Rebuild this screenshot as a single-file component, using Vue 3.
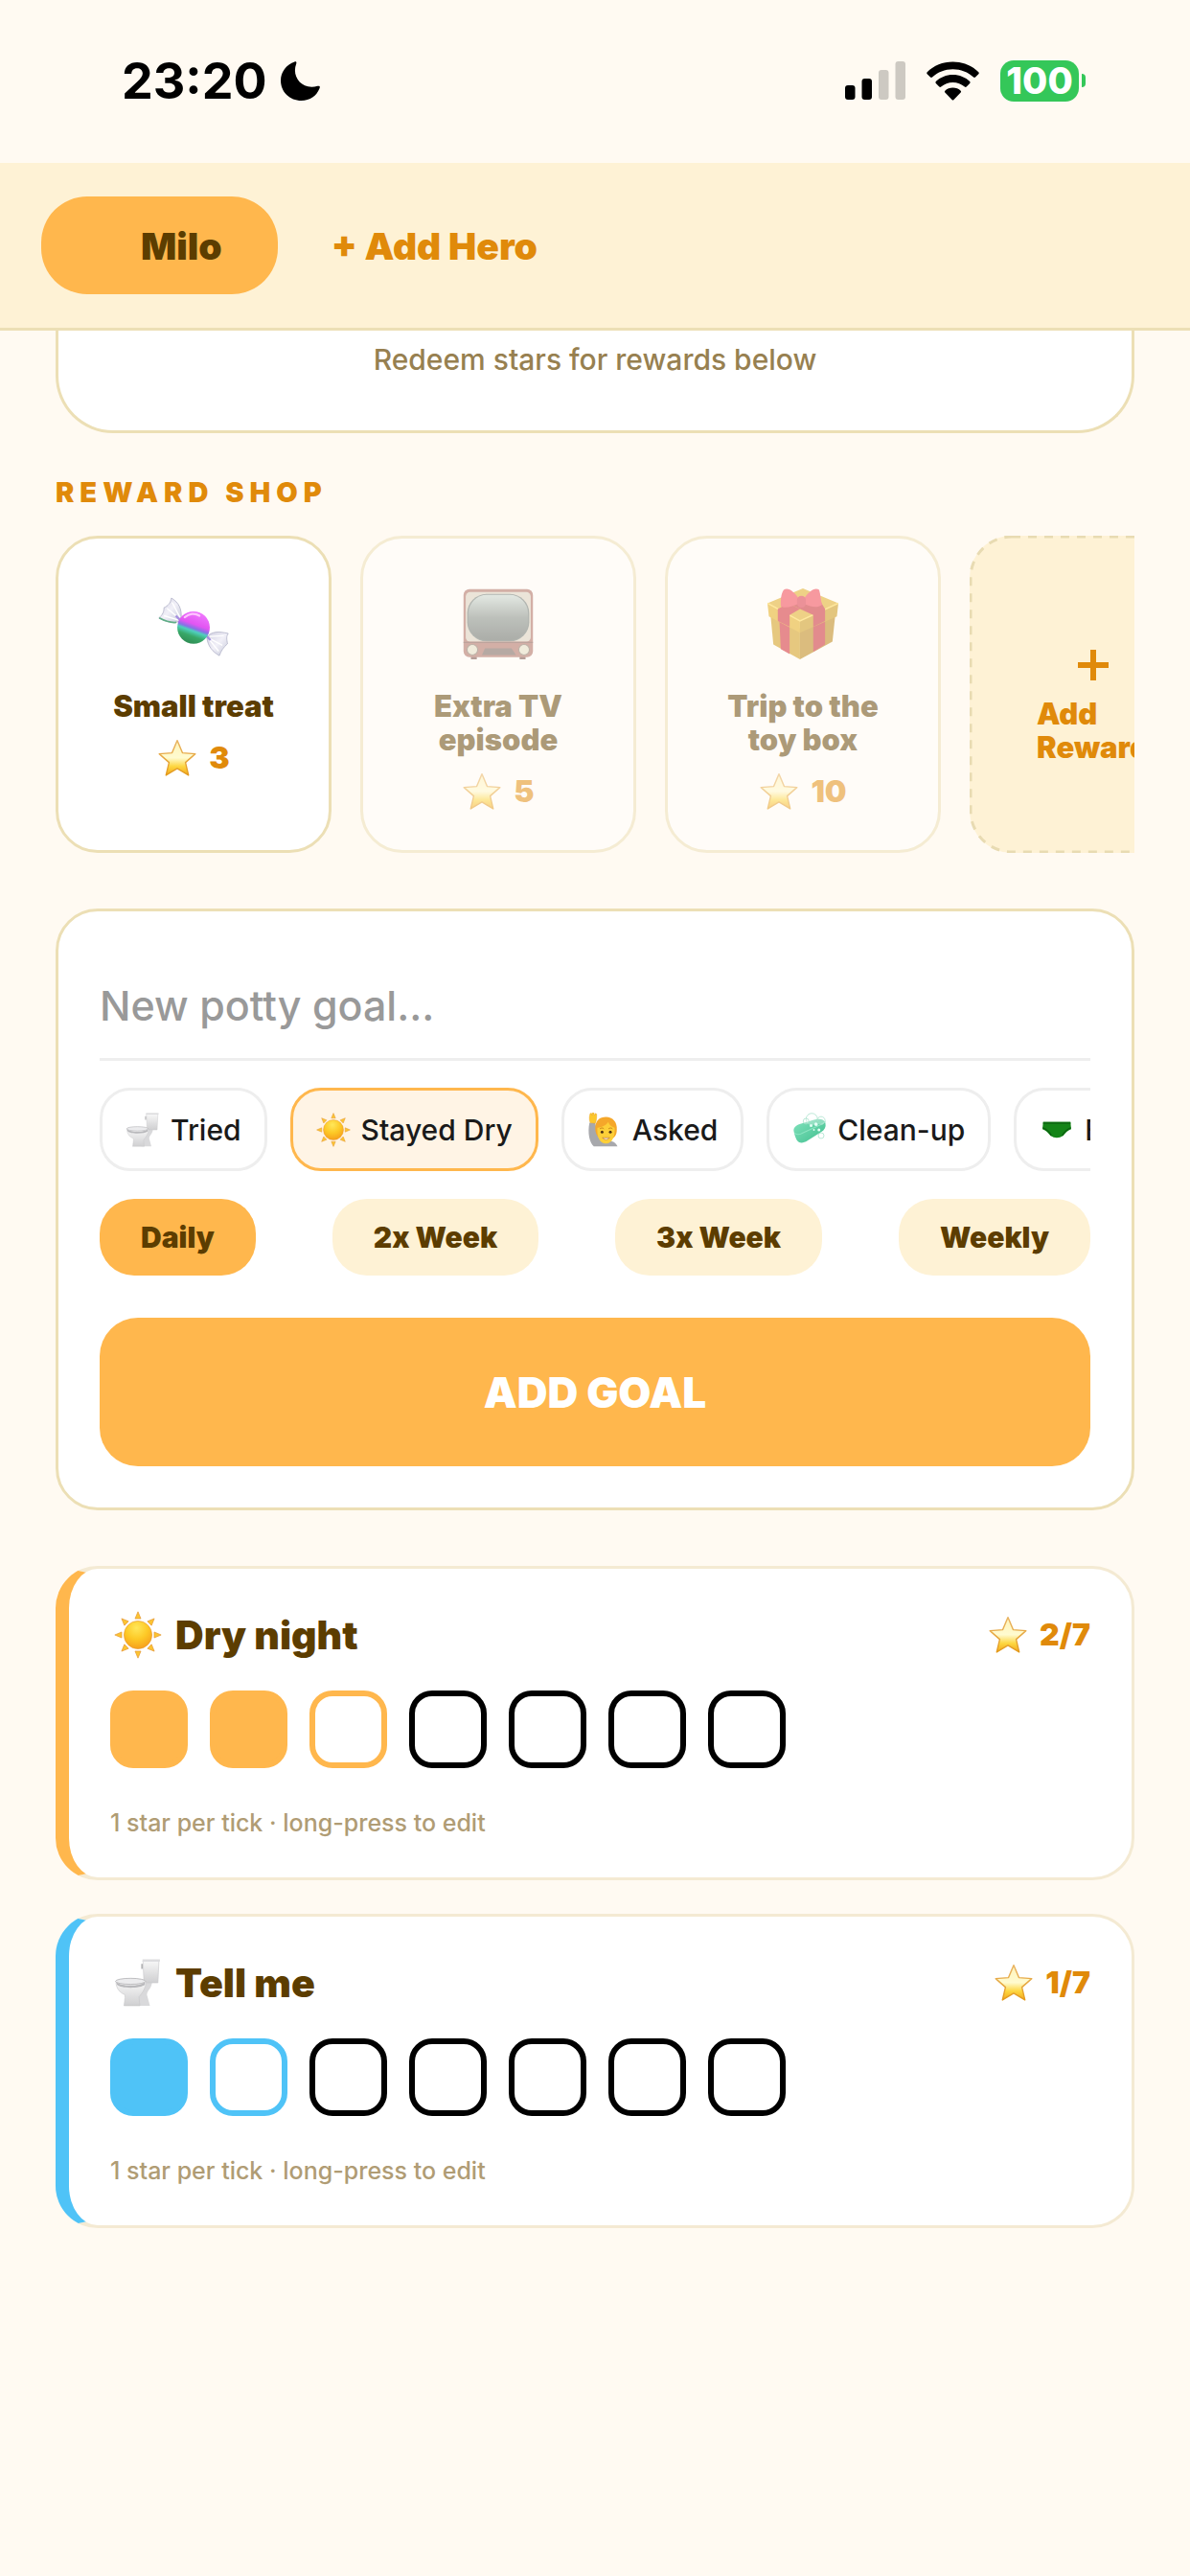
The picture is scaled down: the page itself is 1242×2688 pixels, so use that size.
<template>
  <div class="app">
    <svg class="sprite" aria-hidden="true">
      <defs>
        <linearGradient id="star-fill" x1="0" y1="0" x2="0" y2="1">
          <stop offset="0" stop-color="#fff3b8" />
          <stop offset="0.5" stop-color="#fffbd0" />
          <stop offset="0.75" stop-color="#fdd63f" />
          <stop offset="1" stop-color="#f3a71c" />
        </linearGradient>
        <linearGradient id="star-line" x1="0" y1="0" x2="0" y2="1">
          <stop offset="0" stop-color="#e9b565" />
          <stop offset="1" stop-color="#e39a1c" />
        </linearGradient>
        <radialGradient id="sun-fill" cx="0.45" cy="0.25" r="0.8">
          <stop offset="0" stop-color="#ffe75a" />
          <stop offset="0.5" stop-color="#fdc926" />
          <stop offset="1" stop-color="#f59a1a" />
        </radialGradient>
        <linearGradient id="candy-fill" x1="0.68" y1="0" x2="0.32" y2="1">
          <stop offset="0" stop-color="#f07bff" />
          <stop offset="0.4" stop-color="#e255f2" />
          <stop offset="0.52" stop-color="#8a6fe6" />
          <stop offset="0.6" stop-color="#4fd0bd" />
          <stop offset="0.75" stop-color="#38a868" />
          <stop offset="1" stop-color="#2e8a52" />
        </linearGradient>
        <linearGradient id="wrap-fill" x1="0" y1="0" x2="1" y2="1">
          <stop offset="0" stop-color="#d3d2e2" />
          <stop offset="0.5" stop-color="#f1f0f8" />
          <stop offset="1" stop-color="#c5c8d8" />
        </linearGradient>
        <linearGradient id="screen-fill" x1="0" y1="0" x2="0" y2="1">
          <stop offset="0" stop-color="#c8d8d4" />
          <stop offset="0.5" stop-color="#7d8885" />
          <stop offset="1" stop-color="#5a6361" />
        </linearGradient>
        <linearGradient id="china-fill" x1="0" y1="0" x2="0" y2="1">
          <stop offset="0" stop-color="#f7f7f7" />
          <stop offset="1" stop-color="#cfcfd1" />
        </linearGradient>
        <linearGradient id="soap-fill" x1="0" y1="0" x2="1" y2="1">
          <stop offset="0" stop-color="#82e3bd" />
          <stop offset="1" stop-color="#3fbd8d" />
        </linearGradient>
      </defs>

      <symbol id="icon-star" viewBox="0 0 48 48">
        <path d="M24 3l6.2 14.800 15.300 1.200-11.700 10.300 3.600 15.200L24 36.400 10.600 44.500l3.600-15.200L2.500 19l15.300-1.200z" fill="url(#star-fill)" stroke="url(#star-line)" stroke-width="1.600" stroke-linejoin="round" />
      </symbol>

      <symbol id="icon-sun" viewBox="0 0 48 48">
        <g fill="#fcc530" stroke="#e59a3a" stroke-width="0.700">
          <path v-for="n in 8" :key="n" d="M24 0.800l2.900 6.900h-5.800z" :transform="`rotate(${n * 45} 24 24)`" />
        </g>
        <circle cx="24" cy="24" r="14" fill="url(#sun-fill)" stroke="#e8962a" stroke-width="0.600" />
      </symbol>

      <symbol id="icon-toilet" viewBox="0 0 48 48">
        <path d="M28 24h10c0 5-5 8-5 12l3 11H22z" fill="#d9d9db" />
        <path d="M29 2h16l-1 22H30z" fill="url(#china-fill)" stroke="#c9c9cb" stroke-width="0.600" />
        <path d="M28.500 0.500H46v2.200H28.500z" fill="#dcdcde" />
        <path d="M28 5v5" stroke="#a9a9ac" stroke-width="1.400" />
        <path d="M2 23c0 7 4 11 9 13v3l-1 8h16l-1-9c3-3 7-9 7-15z" fill="url(#china-fill)" stroke="#c4c4c6" stroke-width="0.500" />
        <path d="M2 23c5 5 24 5 29 0v3c-5 4-24 4-28 0z" fill="#b9b9bc" />
        <ellipse cx="16.500" cy="22.500" rx="15" ry="3" fill="#ececee" stroke="#a9a9ac" stroke-width="0.700" />
      </symbol>

      <symbol id="icon-candy" viewBox="0 0 48 48">
        <path d="M15.500 21.500C12 24.500 6 23 0.500 20c2.500-2 3.500-4 3.500-7 2.500-1 4.500-3 5-6.500C14 9.500 16.500 14 15.500 21.500z" fill="url(#wrap-fill)" stroke="#aeb0c6" stroke-width="0.500" />
        <path d="M14.500 20.500L6 13.500M14.800 19.500L9.500 9.500M14 21.500L4 18.500" stroke="#fff" stroke-width="0.900" fill="none" />
        <path d="M0.800 20c4.500 2.500 8 3.300 11.500 3" stroke="#5fae86" stroke-width="1.100" fill="none" />
        <path d="M33 33c3-4 8-4 14.500-2.500-1.500 2-1 4-0.500 7-2.500 2-4.500 5-5.500 8C37 43 33.500 39 33 33z" fill="url(#wrap-fill)" stroke="#aeb0c6" stroke-width="0.500" />
        <path d="M34.500 34.500l6.500 8M35 34l8.500 4.500M35 32.500l9.500-0.500" stroke="#fff" stroke-width="0.900" fill="none" />
        <path d="M12 18.500l4 4M31.500 31l4 4" stroke="#a58fe0" stroke-width="1.500" />
        <circle cx="24" cy="26.500" r="11" fill="url(#candy-fill)" />
        <path d="M18 19.500c3-2.500 7-3 10-1" stroke="#ffc4ff" stroke-width="1.400" fill="none" stroke-linecap="round" />
      </symbol>

      <symbol id="icon-tv" viewBox="0 0 48 48">
        <path d="M5.500 46h4v2h-4zM38.500 46h4v2h-4z" fill="#6d4540" />
        <rect x="0.500" y="0.500" width="47" height="46" rx="4" fill="#a8665c" />
        <rect x="2" y="2.500" width="44" height="33.500" rx="3" fill="#d8d0c0" />
        <rect x="3" y="3.800" width="42" height="32" rx="13" fill="#667270" />
        <rect x="3.800" y="4.400" width="40.400" height="30.800" rx="12.500" fill="url(#screen-fill)" />
        <path d="M0.500 36.500h47" stroke="#7d4f48" stroke-width="0.800" />
        <path d="M15 40.500h18l3 4.500H13z" fill="#6f5b57" />
        <circle cx="6.500" cy="41.500" r="3.600" fill="#e3ddc6" stroke="#7d6b5e" stroke-width="0.700" />
        <circle cx="41.500" cy="41.500" r="3.600" fill="#e3ddc6" stroke="#7d6b5e" stroke-width="0.700" />
      </symbol>

      <symbol id="icon-gift" viewBox="0 0 48 48">
        <path d="M2 17l20 10v21L4 38z" fill="#cf980f" />
        <path d="M46 17L22 27v21l22-12z" fill="#b8800c" />
        <path d="M8 20l7 4v20.500L9 41z" fill="#cf1f2c" />
        <path d="M31 23l8-4v19l-8 5z" fill="#c61f2b" />
        <path d="M0 10L24 0l24 10-26 12z" fill="#dfa91d" />
        <path d="M0 10l22 12v8L1 19z" fill="#e3a912" />
        <path d="M48 10L22 22v8l25-11z" fill="#c9930f" />
        <path d="M0 10l22 12 26-12" fill="none" stroke="#ffd74d" stroke-width="1" />
        <path d="M7 14l7-4 17 8 0 8-0-8-9-4-7 4v8l-8-4z" fill="#cf1f2c" />
        <path d="M31 18l8-4v8l-8 4zM14 10l19-6 6 10-8 4z" fill="#c61f2b" />
        <path d="M22 8C18 2 14-1 11 1c-2 3-2 7-2 11 3 2 8 0 13-2zM24 8c4-6 8-9 11-7 1 3 1 7 2 10-4 3-8 1-13-1z" fill="#f03a4f" />
        <rect x="20" y="5" width="6" height="8" rx="3" fill="#d92a40" />
      </symbol>

      <symbol id="icon-hand-up" viewBox="0 0 48 48">
        <path d="M3 14c-3 14 0 28 6 33h33c-2-5-7-8-13-8-9 0-14-2-15-9l-3-16z" fill="#a7a8ac" />
        <path d="M4 14C2 9 3 4 4 1l2 0 1 3 0-4h2l1 4 1-3 2 1c0 5 0 9-2 13z" fill="#fcc82c" stroke="#e39a1c" stroke-width="0.500" />
        <path d="M11 22C11 11 17 6 26 6s16 7 15 18c0 7-3 10-6 12H17c-4-4-6-8-6-14z" fill="#f5a72a" />
        <path d="M14 21c8-1 13-4 15-8 2 5 6 7 9 8 1 11-3 22-12 22S13 33 14 21z" fill="#fdcf38" />
        <circle cx="20.500" cy="27" r="2" fill="#4e3214" />
        <circle cx="32" cy="27" r="2" fill="#4e3214" />
        <path d="M17.500 22.500c2-1.500 4-1.500 5.500 0M29.500 22.500c2-1.500 4-1.500 5.500 0" stroke="#c27a16" stroke-width="1.200" fill="none" />
        <path d="M21 35q5 5 10 0z" fill="#fff" stroke="#b5651d" stroke-width="0.800" />
      </symbol>

      <symbol id="icon-soap" viewBox="0 0 48 48">
        <path d="M2 26c-1-5 3-8 8-10l20-6c7-2 15-1 16 5 1 5-1 9-6 12L21 39c-6 4-12 4-15-1-2-4-3-7-4-12z" fill="url(#soap-fill)" />
        <path d="M3 28c2 3 7 3 12 0l24-11c4-2 6-3 7-5" stroke="#a5f0d2" stroke-width="1.500" fill="none" opacity="0.600" />
        <g fill="#ffffff" fill-opacity="0.300" stroke="#9bdcc4" stroke-width="0.900">
          <circle cx="27" cy="9" r="8" />
          <circle cx="40" cy="11" r="5.500" />
          <circle cx="19" cy="12" r="4" />
          <circle cx="40" cy="32" r="4" />
        </g>
        <g fill="#e4fff5">
          <circle cx="26" cy="18" r="2" />
          <circle cx="33" cy="16" r="2.500" />
          <circle cx="37" cy="24" r="2" />
          <circle cx="30" cy="24" r="1.200" />
        </g>
      </symbol>

      <symbol id="icon-briefs" viewBox="0 0 48 48">
        <path d="M5 13h38l1 10c-5 2-8 5-11 9q-9 6-18 0c-3-4-6-7-11-9z" fill="#148417" />
        <path d="M5 13h38v3H5z" fill="#0f6d13" />
        <path d="M4.500 21c5 2 9 5 12 11M43.500 21c-5 2-9 5-12 11" stroke="#0b5c10" stroke-width="1.600" fill="none" />
      </symbol>
    </svg>

    <header class="status-bar">
      <div class="status-time">
        <span>23:20</span>
        <svg class="moon" viewBox="0 0 41 41" aria-hidden="true">
          <path d="M14.500 0.500C16 0 16.800 1 16.200 2.500C11 16 22 30.500 38.500 25.800C40.500 25.200 41.300 26.200 40.600 28C37.500 36 30.500 41 21.500 41C9.500 41 0 32 0 20C0 11 6 3.500 14.500 0.500z" />
        </svg>
      </div>
      <div class="status-icons">
        <svg class="signal" viewBox="0 0 63 40" aria-hidden="true">
          <rect x="0" y="25" width="10.500" height="15" rx="3" />
          <rect x="17.500" y="18" width="10.500" height="22" rx="3" />
          <rect x="35" y="9" width="10.500" height="31" rx="3" fill="#cdc9c2" />
          <rect x="52.500" y="0" width="10.500" height="40" rx="3" fill="#cdc9c2" />
        </svg>
        <svg class="wifi" viewBox="0 0 55 41" aria-hidden="true">
          <path d="M27.500 0.500C38 0.500 47.500 4.500 54.300 11.200Q55.200 12.200 54.300 13.200L51 16.600Q50 17.500 49 16.600C43.300 11.300 35.800 8.300 27.500 8.300S11.700 11.300 6 16.600Q5 17.500 4 16.600L0.700 13.200Q-0.200 12.200 0.700 11.200C7.500 4.500 17 0.500 27.500 0.500z" />
          <path d="M27.500 14C34.400 14 40.700 16.700 45.200 21Q46.100 22 45.200 23L41.700 26.500Q40.800 27.400 39.800 26.500C36.500 23.600 32.200 21.900 27.500 21.900S18.500 23.600 15.200 26.500Q14.200 27.400 13.300 26.500L9.800 23Q8.900 22 9.800 21C14.300 16.700 20.600 14 27.500 14z" />
          <path d="M27.500 27.600C30.700 27.600 33.600 28.800 35.700 30.700Q36.600 31.700 35.700 32.600L28.500 40Q27.500 41 26.500 40L19.300 32.600Q18.400 31.700 19.300 30.700C21.400 28.800 24.300 27.600 27.500 27.600z" />
        </svg>
        <div class="battery">
          <span class="battery-level">100</span>
          <span class="battery-cap"></span>
        </div>
      </div>
    </header>

    <nav class="hero-bar">
      <button type="button" class="hero active">Milo</button>
      <button type="button" class="hero-add">+ Add Hero</button>
    </nav>

    <main class="content">
      <section class="summary">
        <p>Redeem stars for rewards below</p>
      </section>

      <h2 class="section-title">REWARD SHOP</h2>
      <div class="rewards">
        <button
          v-for="reward in rewards"
          :key="reward.name"
          type="button"
          class="reward"
          :class="{ locked: reward.cost > stars }"
        >
          <svg class="reward-icon" aria-hidden="true"><use :href="'#icon-' + reward.icon" /></svg>
          <span class="reward-name">{{ reward.name }}</span>
          <span class="reward-cost">
            <svg class="star" aria-hidden="true"><use href="#icon-star" /></svg>
            {{ reward.cost }}
          </span>
        </button>
        <button type="button" class="reward-add">
          <svg class="dashes" aria-hidden="true"><rect /></svg>
          <svg class="plus" viewBox="0 0 32 32" aria-hidden="true"><path d="M16 0v32M0 16h32" /></svg>
          <span>Add Reward</span>
        </button>
      </div>

      <form class="goal-form" @submit.prevent="addGoal">
        <input v-model="newGoal" type="text" class="goal-input" aria-label="New potty goal" placeholder="New potty goal..." />
        <div class="kinds">
          <button
            v-for="item in kinds"
            :key="item.label"
            type="button"
            class="kind"
            :class="{ selected: kind === item.label }"
            :aria-pressed="kind === item.label"
            @click="kind = item.label"
          >
            <svg class="kind-icon" aria-hidden="true"><use :href="'#icon-' + item.icon" /></svg>
            {{ item.label }}
          </button>
        </div>
        <div class="frequencies">
          <button
            v-for="item in frequencies"
            :key="item"
            type="button"
            class="frequency"
            :class="{ selected: frequency === item }"
            :aria-pressed="frequency === item"
            @click="frequency = item"
          >
            {{ item }}
          </button>
        </div>
        <button type="submit" class="submit">ADD GOAL</button>
      </form>

      <div class="goals">
        <article v-for="goal in goals" :key="goal.title" class="goal" :class="goal.color">
          <div class="goal-head">
            <svg class="goal-icon" aria-hidden="true"><use :href="'#icon-' + goal.icon" /></svg>
            <h3>{{ goal.title }}</h3>
            <span class="goal-score">
              <svg class="star" aria-hidden="true"><use href="#icon-star" /></svg>
              {{ goal.done }}/{{ goal.total }}
            </span>
          </div>
          <div class="ticks">
            <button
              v-for="n in goal.total"
              :key="n"
              type="button"
              class="tick"
              :class="{ done: n <= goal.done, next: n === goal.done + 1 }"
              :aria-label="'Tick ' + n"
              @click="tick(goal, n)"
            ></button>
          </div>
          <p class="goal-note">1 star per tick · long-press to edit</p>
        </article>
      </div>
    </main>
  </div>
</template>

<script setup>
import { ref } from 'vue';

const stars = ref(3);
const newGoal = ref('');
const kind = ref('Stayed Dry');
const frequency = ref('Daily');

const rewards = [
  { name: 'Small treat', icon: 'candy', cost: 3 },
  { name: 'Extra TV episode', icon: 'tv', cost: 5 },
  { name: 'Trip to the toy box', icon: 'gift', cost: 10 }
];

const kinds = [
  { label: 'Tried', icon: 'toilet' },
  { label: 'Stayed Dry', icon: 'sun' },
  { label: 'Asked', icon: 'hand-up' },
  { label: 'Clean-up', icon: 'soap' },
  { label: 'Big Kid', icon: 'briefs' }
];

const frequencies = ['Daily', '2x Week', '3x Week', 'Weekly'];

const goals = ref([
  { title: 'Dry night', icon: 'sun', color: 'orange', done: 2, total: 7 },
  { title: 'Tell me', icon: 'toilet', color: 'blue', done: 1, total: 7 }
]);

const tick = (goal, n) => {
  if (n === goal.done + 1) {
    goal.done = n;
    stars.value += 1;
  }
};

const addGoal = () => {
  const title = newGoal.value.trim();
  if (!title) return;
  const icon = kinds.find((item) => item.label === kind.value).icon;
  goals.value.push({ title, icon, color: 'orange', done: 0, total: 7 });
  newGoal.value = '';
};
</script>

<style>
body {
  margin: 0;
  background: #fffaf2;
}
</style>

<style scoped>
.app {
  min-height: 100vh;
  background: #fffaf2;
  color: #5c3d00;
  font-family: Inter, "Liberation Sans", sans-serif;
}

button {
  margin: 0;
  padding: 0;
  border: none;
  background: none;
  color: inherit;
  font: inherit;
  cursor: pointer;
}

h2,
h3,
p {
  margin: 0;
}

.sprite {
  position: absolute;
  width: 0;
  height: 0;
}

/* status bar */
.status-bar {
  display: flex;
  align-items: center;
  justify-content: space-between;
  box-sizing: border-box;
  height: 170px;
  padding: 0 109px 2px 127px;
  color: #000;
}

.status-time {
  display: flex;
  align-items: center;
  gap: 14px;
  font-size: 52px;
  font-weight: 700;
}

.moon {
  width: 41px;
  height: 41px;
}

.status-icons {
  display: flex;
  align-items: center;
  gap: 22px;
}

.signal {
  width: 63px;
  height: 40px;
}

.wifi {
  width: 55px;
  height: 41px;
}

.battery {
  display: flex;
  align-items: center;
  gap: 3px;
}

.battery-level {
  width: 82px;
  border-radius: 14px;
  background: #34c759;
  color: #fff;
  font-size: 38px;
  font-weight: 800;
  line-height: 43px;
  text-align: center;
}

.battery-cap {
  width: 4px;
  height: 14px;
  border-radius: 0 4px 4px 0;
  background: #34c759;
}

/* hero switcher */
.hero-bar {
  display: flex;
  align-items: center;
  gap: 56px;
  padding: 35px 43px;
  border-bottom: 3px solid #ecdfb5;
  background: #fef2d5;
  font-size: 39px;
  font-weight: 900;
}

.hero {
  height: 102px;
  padding: 0 58px 0 104px;
  border-radius: 48px;
}

.hero.active {
  background: #ffb74d;
}

.hero-add {
  color: #e08a0a;
}

.content {
  padding: 0 58px;
}

.summary {
  padding: 12px 0 56px;
  border: 3px solid #ecdfb5;
  border-top: none;
  border-radius: 0 0 60px 60px;
  background: #fff;
  color: #978050;
  font-size: 30px;
  font-weight: 500;
  line-height: 36px;
  text-align: center;
}

/* reward shop */
.section-title {
  margin: 45px 0 28px;
  color: #e08a0a;
  font-size: 29px;
  font-weight: 900;
  line-height: 34px;
  letter-spacing: 6px;
}

.rewards {
  display: flex;
  gap: 30px;
  overflow-x: auto;
  scrollbar-width: none;
}

.reward {
  display: flex;
  flex: none;
  flex-direction: column;
  align-items: center;
  box-sizing: border-box;
  width: 288px;
  padding: 52px 42px 40px;
  border: 3px solid #ecdfb5;
  border-radius: 44px;
  background: #fff;
}

.reward.locked {
  opacity: 0.5;
}

.reward-icon {
  width: 74px;
  height: 74px;
  margin-bottom: 31px;
}

.reward-name {
  font-size: 31px;
  font-weight: 900;
  line-height: 35px;
}

.reward-cost,
.goal-score {
  display: flex;
  align-items: center;
  gap: 12px;
  color: #e08a0a;
  font-size: 32px;
  font-weight: 900;
  line-height: 40px;
}

.reward-cost {
  margin-top: 16px;
}

.star {
  width: 42px;
  height: 42px;
}

.reward-add {
  position: relative;
  display: flex;
  flex: none;
  flex-direction: column;
  align-items: center;
  justify-content: center;
  box-sizing: border-box;
  width: 258px;
  padding: 26px 70px 0;
  border-radius: 44px;
  background: #fef2d5;
  color: #e08a0a;
  font-size: 31px;
  font-weight: 900;
  line-height: 35px;
  text-align: left;
}

.dashes {
  position: absolute;
  top: 0;
  left: 0;
  width: 100%;
  height: 100%;
}

.dashes rect {
  x: 1px;
  y: 1px;
  width: calc(100% - 2px);
  height: calc(100% - 2px);
  rx: 43px;
  fill: none;
  stroke: #e8dbb2;
  stroke-width: 3px;
  stroke-dasharray: 9 8;
}

.plus {
  width: 32px;
  height: 32px;
  margin-bottom: 17px;
  fill: none;
  stroke: #e08a0a;
  stroke-width: 6px;
}

/* new goal form */
.goal-form {
  margin-top: 58px;
  padding: 43px;
  border: 3px solid #ecdfb5;
  border-radius: 44px;
  background: #fff;
}

.goal-input {
  display: block;
  box-sizing: border-box;
  width: 100%;
  height: 113px;
  padding: 0;
  border: none;
  border-bottom: 3px solid #eee;
  outline: none;
  background: none;
  color: #5c3d00;
  font-family: inherit;
  font-size: 43px;
  font-weight: 500;
}

.goal-input::placeholder {
  color: #999;
  opacity: 1;
}

.kinds {
  display: flex;
  gap: 24px;
  margin-top: 28px;
  overflow-x: auto;
  scrollbar-width: none;
}

.kind {
  display: flex;
  flex: none;
  align-items: center;
  gap: 11px;
  box-sizing: border-box;
  height: 87px;
  padding: 0 24px;
  border: 3px solid #eee;
  border-radius: 32px;
  color: #1a1a1a;
  font-size: 30px;
  font-weight: 500;
}

.kind.selected {
  border-color: #ffb74d;
  background: #fff4e5;
}

.kind-icon {
  width: 36px;
  height: 36px;
}

.frequencies {
  display: flex;
  justify-content: space-between;
  margin-top: 29px;
}

.frequency {
  height: 80px;
  padding: 0 43px;
  border-radius: 36px;
  background: #fef2d5;
  font-size: 30px;
  font-weight: 900;
}

.frequency.selected {
  background: #ffb74d;
}

.submit {
  width: 100%;
  height: 155px;
  margin-top: 44px;
  border-radius: 40px;
  background: #ffb74d;
  color: #fff;
  font-size: 44px;
  font-weight: 900;
}

/* goals */
.goals {
  display: flex;
  flex-direction: column;
  gap: 35px;
  margin-top: 58px;
  padding-bottom: 58px;
}

.goal {
  padding: 44px 43px 42px;
  border: 3px solid #f4ead3;
  border-left: 14px solid var(--accent);
  border-radius: 44px;
  background: #fff;
}

.goal.orange {
  --accent: #ffb74d;
}

.goal.blue {
  --accent: #4fc3f7;
}

.goal-head {
  display: flex;
  align-items: center;
  height: 50px;
}

.goal-icon {
  width: 58px;
  height: 50px;
  margin-right: 10px;
}

.goal-head h3 {
  flex: 1;
  font-size: 41px;
  font-weight: 900;
  line-height: 46px;
}

.ticks {
  display: flex;
  gap: 23px;
  margin-top: 33px;
}

.tick {
  box-sizing: border-box;
  width: 81px;
  height: 81px;
  border: 6px solid #000;
  border-radius: 24px;
}

.tick.next {
  border-color: var(--accent);
}

.tick.done {
  border-color: var(--accent);
  background: var(--accent);
}

.goal-note {
  margin-top: 42px;
  color: #b09c74;
  font-size: 25px;
  font-weight: 500;
  line-height: 30px;
}
</style>
